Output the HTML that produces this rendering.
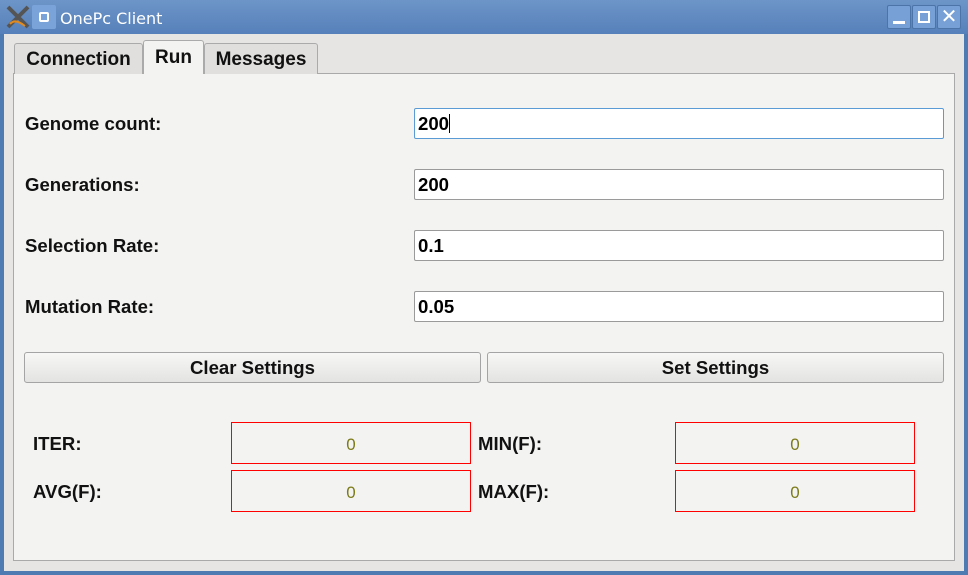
<!DOCTYPE html>
<html><head><style>
*{box-sizing:border-box;margin:0;padding:0}
body{width:968px;height:575px;overflow:hidden;font-family:"Liberation Sans",sans-serif;background:#4f7bb3;position:relative}
.abs{position:absolute}
.title{left:0;top:0;width:968px;height:34px;background:linear-gradient(#6d95c8,#5680ba)}
.client{left:4px;top:34px;width:960px;height:537px;background:#e6e5e3}
.pane{left:13px;top:73px;width:942px;height:488px;background:#f3f3f1;border:1px solid #a9a9a9}
.tab{top:43px;height:31px;background:#e0dfdd;border:1px solid #aaa;border-bottom:none;border-radius:3px 3px 0 0;font-weight:bold;font-size:19px;text-align:center;line-height:31px;color:#111}
.lbl{font-weight:bold;font-size:18.6px;color:#111}
.inp{left:414px;width:530px;height:31px;background:#fff;border:1px solid #9a9a9a;border-radius:2px;font-weight:bold;font-size:18.6px;line-height:29px;padding-left:3px;color:#000}
.btn{top:352px;height:31px;border:1px solid #a4a4a4;border-radius:3px;background:linear-gradient(#f7f7f6,#e3e3e1);font-weight:bold;font-size:18.6px;text-align:center;line-height:29px;color:#111}
.lcd{width:240px;height:42px;border:1px solid #f00;text-align:center;line-height:43px;font-size:17px;color:#7b7b1a}
.wb{top:5px;width:24px;height:24px;background:#76a0d6;border:1px solid #4c74a8;border-radius:2px;color:#fff;text-align:center}
</style></head><body>
<div class="abs title"></div>
<svg class="abs" style="left:5px;top:4px" width="26" height="26" viewBox="0 0 26 26"><path d="M3 3 L23 23 M23 3 L3 23" stroke="#555" stroke-width="4"/><path d="M5 20 Q10 14 20 22" stroke="#e08a20" stroke-width="2" fill="none"/></svg>
<div class="abs" style="left:32px;top:5px;width:24px;height:24px;background:#7aa3d9;border-radius:2px"><div style="margin:7px auto;width:10px;height:10px;border:2px solid #fff;border-radius:2px"></div></div>
<div class="abs" style="left:60px;top:9px;color:#fff;font-family:'DejaVu Sans',sans-serif;font-size:16px">OnePc Client</div>
<div class="abs wb" style="left:887px"><div style="position:absolute;left:5px;top:15px;width:12px;height:3px;background:#fff"></div></div>
<div class="abs wb" style="left:912px"><div style="position:absolute;left:5px;top:5px;width:12px;height:12px;border:2px solid #fff"></div></div>
<div class="abs wb" style="left:937px;font-size:20px;line-height:22px">✕</div>
<div class="abs client"></div>
<div class="abs pane"></div>
<div class="abs tab" style="left:14px;width:129px">Connection</div>
<div class="abs tab" style="left:204px;width:114px">Messages</div>
<div class="abs tab" style="left:143px;top:40px;height:34px;width:61px;background:#f3f3f1;line-height:34px">Run</div>
<div class="abs lbl" style="left:25px;top:113px">Genome count:</div>
<div class="abs lbl" style="left:25px;top:174px">Generations:</div>
<div class="abs lbl" style="left:25px;top:235px">Selection Rate:</div>
<div class="abs lbl" style="left:25px;top:296px">Mutation Rate:</div>
<div class="abs inp" style="top:108px;border-color:#5b9bd5">200<span style="display:inline-block;width:1px;height:19px;background:#000;vertical-align:-3px"></span></div>
<div class="abs inp" style="top:169px">200</div>
<div class="abs inp" style="top:230px">0.1</div>
<div class="abs inp" style="top:291px">0.05</div>
<div class="abs btn" style="left:24px;width:457px">Clear Settings</div>
<div class="abs btn" style="left:487px;width:457px">Set Settings</div>
<div class="abs lbl" style="left:33px;top:433px">ITER:</div>
<div class="abs lbl" style="left:33px;top:481px">AVG(F):</div>
<div class="abs lbl" style="left:478px;top:433px">MIN(F):</div>
<div class="abs lbl" style="left:478px;top:481px">MAX(F):</div>
<div class="abs lcd" style="left:231px;top:422px">0</div>
<div class="abs lcd" style="left:231px;top:470px">0</div>
<div class="abs lcd" style="left:675px;top:422px">0</div>
<div class="abs lcd" style="left:675px;top:470px">0</div>
</body></html>
